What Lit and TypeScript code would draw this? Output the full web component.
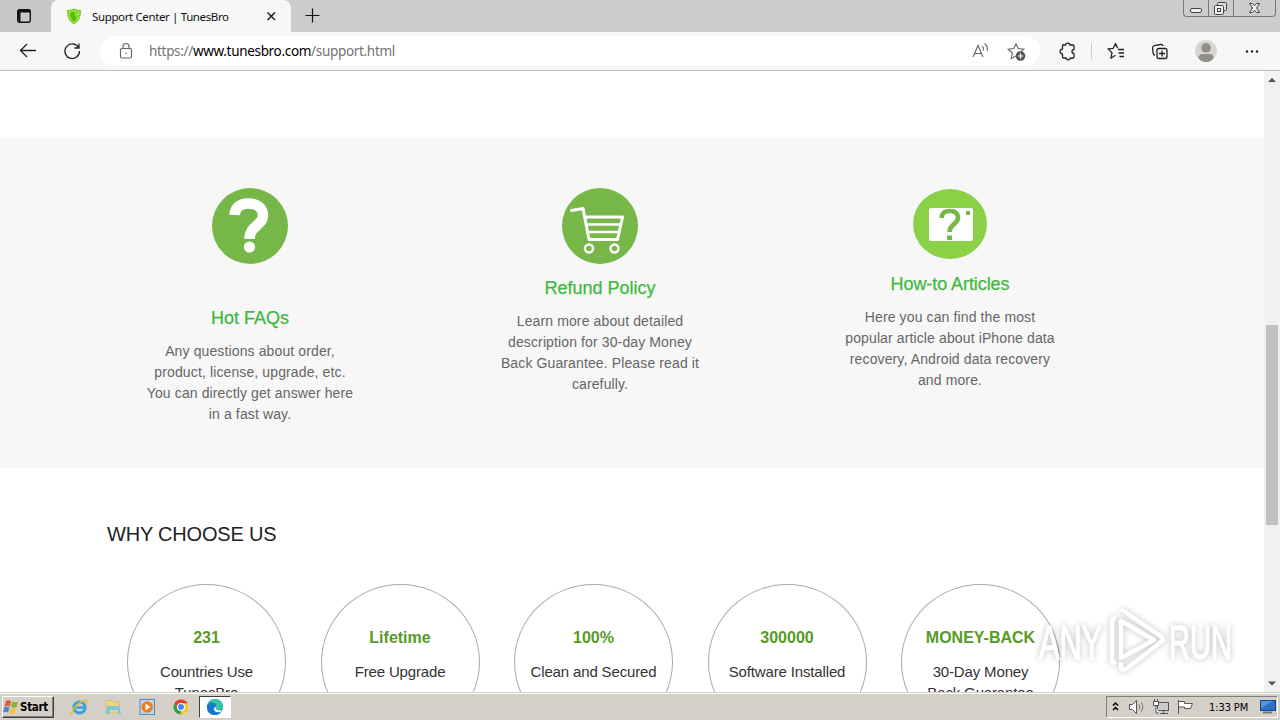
import { LitElement, html, css, svg } from 'lit'
import { customElement, property } from 'lit/decorators.js'

const faqIcon = svg`
  <svg width="76" height="76" viewBox="0 0 76 76">
    <circle cx="38" cy="38" r="38" fill="#77b748"/>
    <path d="M22.500 27C23 19 29 15.500 36 15.500C45 15.500 51 20 51 27.500C51 37 37.500 38 37.500 51" fill="none" stroke="#fff" stroke-width="10.500"/>
    <circle cx="37.500" cy="59" r="5.600" fill="#fff"/>
    <path d="M31 51.700H44" stroke="#77b748" stroke-width="1.600"/>
  </svg>`

const cartIcon = svg`
  <svg width="76" height="76" viewBox="0 0 76 76">
    <circle cx="38" cy="38" r="38" fill="#77b748"/>
    <g fill="none" stroke="#fff" stroke-width="3" stroke-linecap="round" stroke-linejoin="round">
      <path d="M9.500 22.500L21 20.500L27 51.500H55.500L60.500 29H23"/>
      <path d="M24 36.500H58M25.500 44H56.500" stroke-width="2.500"/>
      <circle cx="27" cy="60.500" r="4" stroke-width="2.400"/>
      <circle cx="52.500" cy="60.500" r="4" stroke-width="2.400"/>
    </g>
  </svg>`

const articleIcon = svg`
  <svg width="74" height="70" viewBox="0 0 74 70">
    <ellipse cx="37" cy="35" rx="37" ry="35" fill="#8bd148"/>
    <rect x="16" y="19" width="44" height="33" rx="2" fill="#fff"/>
    <path d="M28.500 29C29 23 32.500 22 37 22C42 22 45 24.500 45 29C45 35 36.500 35 36.500 43" fill="none" stroke="#77b748" stroke-width="4.600"/>
    <rect x="34" y="46.500" width="5" height="4.500" fill="#77b748"/>
    <rect x="53" y="22" width="4" height="4" fill="#77b748"/>
  </svg>`

const services = [
  {
    kind: 'faq',
    icon: faqIcon,
    title: 'Hot FAQs',
    lines: ['Any questions about order,', 'product, license, upgrade, etc.', 'You can directly get answer here', 'in a fast way.']
  },
  {
    kind: 'refund',
    icon: cartIcon,
    title: 'Refund Policy',
    lines: ['Learn more about detailed', 'description for 30-day Money', 'Back Guarantee. Please read it', 'carefully.']
  },
  {
    kind: 'howto',
    icon: articleIcon,
    title: 'How-to Articles',
    lines: ['Here you can find the most', 'popular article about iPhone data', 'recovery, Android data recovery', 'and more.']
  }
]

const reasons = [
  { title: '231', lines: ['Countries Use', 'TunesBro'] },
  { title: 'Lifetime', lines: ['Free Upgrade'] },
  { title: '100%', lines: ['Clean and Secured'] },
  { title: '300000', lines: ['Software Installed'] },
  { title: 'MONEY-BACK', lines: ['30-Day Money', 'Back Guarantee'] }
]

@customElement('browser-tabs')
class BrowserTabs extends LitElement {
  static styles = css`
    :host {
      display: flex;
      height: 32px;
      background: #ccc;
      font-family: "Noto Sans", "Open Sans", sans-serif;
    }
    .menu {
      width: 51px;
      height: 32px;
      background: #c8c8c8;
      border-radius: 0 0 7px 0;
    }
    .tab {
      display: flex;
      align-items: center;
      width: 240px;
      height: 32px;
      background: #f7f7f7;
      border-radius: 8px 8px 0 0;
    }
    .shield {
      margin-left: 15px;
    }
    .title {
      width: 168px;
      margin-left: 10px;
      font-size: 11.5px;
      letter-spacing: -0.37px;
      white-space: nowrap;
      color: #111;
    }
    .close {
      margin-left: -1px;
    }
    .plus {
      margin-left: 13px;
    }
    .window {
      display: flex;
      width: 93px;
      height: 17px;
      margin: 0 4px 0 auto;
      box-sizing: border-box;
      border: 1px solid #777;
      border-top: 0;
      border-radius: 0 0 4px 4px;
    }
  `

  render () {
    return html`
      <svg class="menu" viewBox="0 0 51 32">
        <rect x="17.700" y="9.700" width="12.600" height="12.600" rx="2" fill="none" stroke="#111" stroke-width="1.400"/>
        <path d="M17.500 12.500V11q0-1.500 2-1.500h9q2 0 2 1.500v1.500z M17.500 12h3v10h-2z" fill="#111"/>
      </svg>
      <div class="tab">
        <svg class="shield" width="16" height="17" viewBox="0 0 16 17">
          <path d="M8 .5Q11 2 15 2Q15.500 12 8 16.500Q.5 12 1 2Q5 2 8 .5Z" fill="#74cf1f"/>
          <path d="M8 2.800Q10.500 4 13 4Q13 11 8 14.500Q3 11 3 4Q5.500 4 8 2.800Z" fill="#58bd0a" stroke="#bdee85"/>
          <path d="M8 4Q10 5 12 5Q12 8 10.500 10.500Z" fill="#8fe23b"/>
        </svg>
        <span class="title">Support Center | TunesBro</span>
        <svg class="close" width="24" height="24" viewBox="0 0 24 24">
          <path d="M8.500 8.500L16 16M16 8.500L8.500 16" stroke="#111" stroke-width="1.300"/>
        </svg>
      </div>
      <svg class="plus" width="18" height="32" viewBox="0 0 18 32">
        <path d="M1.500 15.500H15.500M8.500 8.500V22.500" stroke="#111" stroke-width="1.200"/>
      </svg>
      <div class="window">
        <svg width="91" height="16" viewBox="0 0 91 16" fill="none" stroke="#444">
          <path d="M24.500 0V16M49.500 0V16" stroke="#777"/>
          <rect x="6.500" y="8.500" width="11" height="4" rx="1.500" fill="#eee"/>
          <rect x="33.500" y="2.500" width="9" height="8" rx="1" fill="#ddd"/>
          <rect x="30.500" y="5.500" width="9" height="9" rx="1" fill="#eee"/>
          <rect x="33.500" y="8.500" width="3" height="3"/>
          <path d="M65.500 3.500h3l2 2.300l2-2.300h3l-3 4.500l3 4.500h-3l-2-2.300l-2 2.300h-3l3-4.500z" fill="#eee"/>
        </svg>
      </div>
    `
  }
}

@customElement('browser-toolbar')
class BrowserToolbar extends LitElement {
  static styles = css`
    :host {
      display: flex;
      align-items: center;
      box-sizing: border-box;
      height: 39px;
      background: #f7f7f7;
      border-bottom: 1px solid #b9b9b9;
    }
    .nav {
      flex: none;
      width: 100px;
    }
    .address {
      display: flex;
      align-items: center;
      width: 940px;
      height: 30px;
      background: #fff;
      border-radius: 15px;
    }
    .lock {
      margin-left: 16px;
    }
    .url {
      margin-left: 13px;
      font: 13.5px/18px "Noto Sans", "Open Sans", sans-serif;
      letter-spacing: -0.32px;
      color: #737373;
      white-space: nowrap;
    }
    .host {
      color: #000;
    }
    .inner {
      margin-left: auto;
    }
  `

  render () {
    return html`
      <svg class="nav" width="100" height="38" viewBox="0 0 100 38" fill="none" stroke="#222" stroke-width="1.300">
        <path d="M36 18.500H20.500M27 12L20.500 18.500L27 25"/>
        <path d="M78.500 15.500A7.300 7.300 0 1 0 79.500 19M79 11.500V16H74.500"/>
      </svg>
      <div class="address">
        <svg class="lock" width="20" height="20" viewBox="0 0 20 20" fill="none" stroke="#666" stroke-width="1.200">
          <rect x="4.500" y="7.500" width="11" height="9.500" rx="1.500"/>
          <path d="M7 7.500V5.500a3 3 0 0 1 6 0v2"/>
          <circle cx="10" cy="12.200" r=".8" fill="#666" stroke="none"/>
        </svg>
        <span class="url">https://<span class="host">www.tunesbro.com</span>/support.html</span>
        <svg class="inner" width="72" height="30" viewBox="0 0 72 30" fill="none" stroke="#666" stroke-width="1.100">
          <path d="M5 21L10 9.500L15 21M6.500 17.500H13.500M14.500 10.500q1.500 1.500 1 4M16.500 7.500q4 3 2.500 7.500"/>
          <path d="M48 7.500l2.200 5l5.600.6l-4 3.900M48 7.500l-2.200 5l-5.600.6l4.200 3.900l-1.200 5.500l4.800-2.600"/>
          <circle cx="52.500" cy="20" r="4.800" fill="#555" stroke="none"/>
          <path d="M49.800 20h5.400M52.500 17.300v5.400" stroke="#fff"/>
        </svg>
      </div>
      <svg width="240" height="38" viewBox="1040 32 240 38" fill="none" stroke="#222" stroke-width="1.300" stroke-linejoin="round">
        <path d="M1062.500 45h3a2.300 2.300 0 0 1 4.500 0h3q1 0 1 1v3.500a2 2 0 0 0 0 4V57q0 1-1 1h-2.500a2.300 2.300 0 0 1-4.500 0h-2.500q-1 0-1-1v-3a2.400 2.400 0 0 1 0-4.800V46q0-1 1-1z"/>
        <path d="M1091.500 43v16" stroke="#ccc" stroke-width="1"/>
        <path d="M1118 49.500h6M1118.500 53h5.500M1119.500 56.500h4.500M1115.500 55.200l-4.600 3l1.100-5.500l-4-3.800l5.300-.6l2.200-4.800l2.200 4.800"/>
        <rect x="1157" y="48.500" width="10" height="10" rx="2"/>
        <path d="M1162 50.500v6M1159 53.500h6M1155 55.500q-2-1-2-3l-.5-4.500q0-2 2-2.300l6-1.200q2-.3 2.500 1.500"/>
        <g stroke="none">
          <circle cx="1206" cy="51" r="11" fill="#d8d6d4"/>
          <circle cx="1206" cy="47.800" r="4.800" fill="#918d89"/>
          <path d="M1198.500 58q0-4 4-4h7q4 0 4 4q-2.500 4-7.500 4t-7.500-4z" fill="#918d89"/>
          <circle cx="1247" cy="51.500" r="1.200" fill="#222"/>
          <circle cx="1252" cy="51.500" r="1.200" fill="#222"/>
          <circle cx="1257" cy="51.500" r="1.200" fill="#222"/>
        </g>
      </svg>
    `
  }
}

@customElement('service-card')
class ServiceCard extends LitElement {
  @property({ attribute: false }) item: any

  static styles = css`
    :host {
      display: block;
      width: 350px;
      text-align: center;
      font-family: "Liberation Sans", Arial, sans-serif;
    }
    svg {
      display: block;
      margin: 0 auto;
    }
    .howto svg {
      margin-top: 1px;
    }
    h3 {
      margin: 12px 0 0;
      font-size: 18px;
      line-height: 24px;
      font-weight: 400;
      color: #3eb93e;
      -webkit-text-stroke: 0.25px #3eb93e;
    }
    .faq h3 {
      margin-top: 42px;
    }
    .howto h3 {
      margin-top: 13px;
      letter-spacing: -0.08px;
    }
    p {
      margin: 11px 0 0;
      font-size: 14px;
      line-height: 21px;
      letter-spacing: 0.12px;
      color: #666;
      white-space: nowrap;
    }
  `

  render () {
    return html`
      <div class=${this.item.kind}>
        ${this.item.icon}
        <h3>${this.item.title}</h3>
        <p>${this.item.lines.map((line: string) => html`${line}<br>`)}</p>
      </div>
    `
  }
}

@customElement('reason-badge')
class ReasonBadge extends LitElement {
  @property({ attribute: false }) item: any

  static styles = css`
    :host {
      flex: none;
      display: block;
      box-sizing: border-box;
      width: 159px;
      height: 156px;
      padding-top: 42px;
      border: 1px solid #aaa;
      border-radius: 50%;
      text-align: center;
      font-family: "Liberation Sans", Arial, sans-serif;
    }
    h4 {
      margin: 0;
      font-size: 16px;
      line-height: 22px;
      color: #559b25;
      white-space: nowrap;
    }
    p {
      margin: 12px 0 0;
      font-size: 15px;
      line-height: 21px;
      letter-spacing: -0.15px;
      color: #333;
      white-space: nowrap;
    }
  `

  render () {
    return html`
      <h4>${this.item.title}</h4>
      <p>${this.item.lines.map((line: string) => html`${line}<br>`)}</p>
    `
  }
}

@customElement('task-bar')
class TaskBar extends LitElement {
  static styles = css`
    :host {
      display: flex;
      align-items: center;
      box-sizing: border-box;
      height: 28px;
      padding: 2px 2px 0 2px;
      background: #d4d0c8;
      box-shadow: inset 0 1px #d4d0c8, inset 0 2px #fff;
      color: #000;
    }
    .start {
      display: flex;
      align-items: center;
      box-sizing: border-box;
      width: 52px;
      height: 22px;
      border: 1px solid;
      border-color: #fff #404040 #404040 #fff;
      box-shadow: inset -1px -1px #808080;
      font: bold 11.5px "DejaVu Sans Condensed", "DejaVu Sans", sans-serif;
      letter-spacing: -0.3px;
    }
    .start svg {
      flex: none;
      margin-right: 1px;
    }
    .quick {
      margin-left: 14px;
    }
    .active {
      display: flex;
      justify-content: center;
      align-items: center;
      box-sizing: border-box;
      width: 32px;
      height: 22px;
      margin-left: 1px;
      background: #fff;
      border: 1px solid;
      border-color: #404040 #fff #fff #404040;
    }
    .tray {
      display: flex;
      align-items: center;
      box-sizing: border-box;
      width: 172px;
      height: 22px;
      margin-left: auto;
      border: 1px solid;
      border-color: #808080 #fff #fff #808080;
    }
    .clock {
      width: 50px;
      font: 11px "DejaVu Sans Condensed", "DejaVu Sans", sans-serif;
      letter-spacing: -0.1px;
      white-space: nowrap;
    }
  `

  render () {
    return html`
      <div class="start">
        <svg width="16" height="16" viewBox="0 0 16 16">
          <path d="M3 2q2.500-1.500 5 0L7 7.500Q4.500 6 1.500 7.500z" fill="#e9582b"/>
          <path d="M9 2.500q2.500 1.300 6 0L13.500 8q-3 1.300-5.500 0z" fill="#7dbb35"/>
          <path d="M1.300 8.500q2.500-1.300 5.200 0L5 13.500q-2.500-1.300-5 0z" fill="#4286cf"/>
          <path d="M7.700 9q2.700 1.300 5.500 0l-1.500 5q-2.700 1.300-5.500 0z" fill="#f8c22e"/>
        </svg>
        Start
      </div>
      <svg class="quick" width="130" height="22" viewBox="68 696 130 22">
        <ellipse cx="79.500" cy="707.500" rx="5.600" ry="5.500" fill="none" stroke="#38a2dc" stroke-width="3"/>
        <path d="M75 707.500h9.500" stroke="#38a2dc" stroke-width="2.500"/>
        <path d="M73 713q-3 2 .5-4Q79 702 84 700.500q4-1 2.500 3" fill="none" stroke="#f0b83c" stroke-width="1.600"/>
        <path d="M106 700.500h5l1.500 1.500h7v11h-13.500z" fill="#f0d580" stroke="#d1ae50" stroke-width=".6"/>
        <path d="M107 706h12l2 8h-3v-4h-8v4h-4z" fill="#7cc7e8"/>
        <rect x="140" y="699.500" width="14.500" height="15" fill="#bcd8ee" stroke="#5887b8"/>
        <circle cx="147.200" cy="707" r="5.800" fill="#f47b16"/>
        <path d="M145.500 703.500v7l5-3.500z" fill="#fff"/>
        <circle cx="181" cy="707" r="7.500" fill="#f7c928"/>
        <path d="M174.500 703.300a7.500 7.500 0 0 1 13 0H181l-3.300 5.600z" fill="#df3e30"/>
        <path d="M174.500 703.300l3.300 5.700l3.200 1.800l-.5 3.700a7.500 7.500 0 0 1-6-11.200z" fill="#2c9f4b"/>
        <circle cx="181" cy="707" r="3.500" fill="#4285f4" stroke="#fff" stroke-width="1.200"/>
      </svg>
      <div class="active">
        <svg width="18" height="18" viewBox="0 0 18 18">
          <circle cx="9" cy="9" r="8" fill="#1679c8"/>
          <path d="M1.300 7Q3 1 9 1q8 0 8 7.500q-.5 3.500-4.500 3.500q-3 0-2.500-2Q10 5 5.500 5Q3 5 1.300 7z" fill="#39c6a5"/>
          <path d="M1 9q0-4.500 5.500-4.500q4 .5 3.500 4.500Q7 8 7.500 11.500Q9 14.500 14.500 14.500Q12 17 9 17Q1 17 1 9z" fill="#1479cc"/>
          <path d="M10 9q-2.500 0-2 3q1.500 3 6.500 2l1.500-2.200q-5 1.500-6-.8z" fill="#fff"/>
        </svg>
      </div>
      <div class="tray">
        <svg width="102" height="20" viewBox="1107 697 102 20" fill="none" stroke="#555">
          <path d="M1113 705.500l2.500-2.500l2.500 2.500M1113 710l2.500-2.500l2.500 2.500" stroke="#000" stroke-width="1.500"/>
          <path d="M1129.500 704.500h3l4-4v13l-4-4h-3z" fill="#fff"/>
          <path d="M1139 704.500q1.500 2.500 0 5M1141.500 702.500q3 4.500 0 9" stroke="#777"/>
          <rect x="1157.500" y="702.500" width="11" height="8" fill="#ccc"/>
          <path d="M1160 713.500h8M1163.500 711v2.500"/>
          <path d="M1153.500 701.500h5v4h-5zM1154.500 699v2.500M1157.500 699v2.500M1156 705.500v7.500h3" fill="#fff"/>
          <path d="M1178.500 700v14M1178.500 701.500h6v2h8l-2 5h-6v-1.500h-6" fill="#fff"/>
        </svg>
        <span class="clock">1:33 PM</span>
        <svg width="18" height="18" viewBox="0 0 18 18">
          <rect x="1.500" y="2.500" width="15" height="10" fill="#2d70c9" stroke="#174783"/>
          <path d="M2 3h12L2 10z" fill="#5398de"/>
          <path d="M4 14.500h9" stroke="#777" stroke-width="2"/>
        </svg>
      </div>
    `
  }
}

@customElement('app-root')
class AppRoot extends LitElement {
  static styles = css`
    :host {
      display: flex;
      flex-direction: column;
      position: relative;
      width: 1280px;
      height: 720px;
      overflow: hidden;
      background: #fff;
      font-family: "Liberation Sans", Arial, sans-serif;
    }
    .view {
      display: flex;
      height: 621px;
    }
    .page {
      width: 1264px;
      overflow: hidden;
    }
    .services {
      display: flex;
      box-sizing: border-box;
      height: 330px;
      margin-top: 67px;
      padding: 50px 0 0 75px;
      background: #f7f7f7;
    }
    h2 {
      margin: 52px 0 0 107px;
      font-size: 20px;
      line-height: 28px;
      font-weight: 400;
      letter-spacing: -0.2px;
      color: #222;
    }
    .reasons {
      display: flex;
      gap: 34.5px;
      margin: 36px 0 0 127px;
    }
    .scroll {
      display: flex;
      flex-direction: column;
      align-items: center;
      width: 16px;
      background: #f1f1f1;
    }
    .thumb {
      width: 12px;
      height: 200px;
      margin: 237px 0 150px;
      background: #c1c1c1;
    }
    .watermark {
      position: absolute;
      left: 1034px;
      top: 604px;
      overflow: visible;
      filter: drop-shadow(0 0 3px rgba(0, 0, 0, 0.3));
      opacity: 0.85;
    }
  `

  render () {
    return html`
      <browser-tabs></browser-tabs>
      <browser-toolbar></browser-toolbar>
      <div class="view">
        <div class="page">
          <div class="services">
            ${services.map(item => html`<service-card .item=${item}></service-card>`)}
          </div>
          <h2>WHY CHOOSE US</h2>
          <div class="reasons">
            ${reasons.map(item => html`<reason-badge .item=${item}></reason-badge>`)}
          </div>
        </div>
        <div class="scroll">
          <svg width="16" height="17" viewBox="0 0 16 17"><path d="M4 11L8 7L12 11z" fill="#505050"/></svg>
          <div class="thumb"></div>
          <svg width="16" height="17" viewBox="0 0 16 17"><path d="M4 6.500L8 10.500L12 6.500z" fill="#505050"/></svg>
        </div>
      </div>
      <task-bar></task-bar>
      <svg class="watermark" width="216" height="76" viewBox="1034 604 216 76" fill="#fff">
        <g font-size="49" stroke="#fff" stroke-width="1.500">
          <text x="1039" y="659" textLength="63" lengthAdjust="spacingAndGlyphs">ANY</text>
          <text x="1169" y="659" textLength="63" lengthAdjust="spacingAndGlyphs">RUN</text>
        </g>
        <g fill="none" stroke="#fff" stroke-width="4.500" stroke-linejoin="round">
          <path d="M1121 621V658L1154 640z"/>
          <path d="M1116 618q-4 0-4 4v38q0 4 4 2M1122 612q0-2 3 0L1162 637q2 3-1 5L1126 669q-5 2-5-2v-5"/>
        </g>
      </svg>
    `
  }
}
